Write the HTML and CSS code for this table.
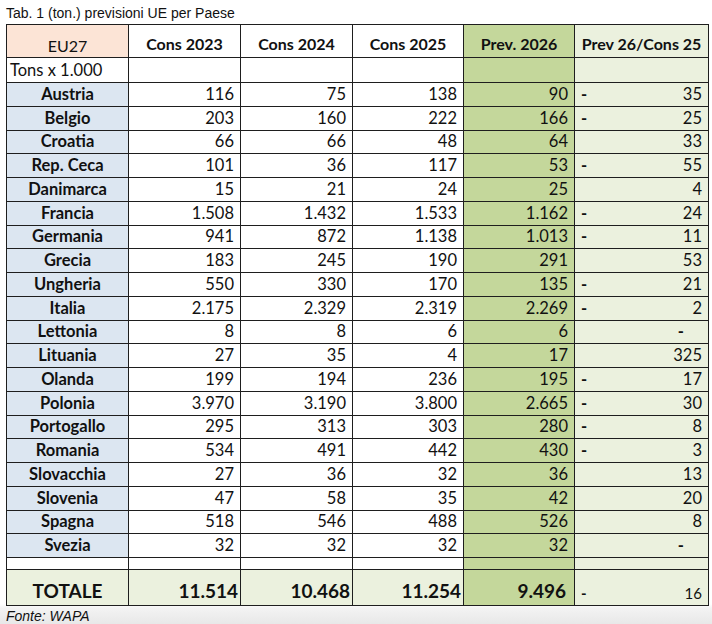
FILE: index.html
```html
<!DOCTYPE html>
<html lang="it">
<head>
<meta charset="utf-8">
<title>Tab. 1 previsioni UE per Paese</title>
<link rel="stylesheet" href="styles.css">
</head>
<body>
<div class="page">
  <div class="caption">Tab. 1 (ton.) previsioni UE per Paese</div>
  <table class="grid">
    <colgroup>
      <col class="c1"><col class="c2"><col class="c3"><col class="c4"><col class="c5"><col class="c6">
    </colgroup>
    <thead>
      <tr class="head">
        <th class="eu">EU27</th>
        <th>Cons 2023</th>
        <th>Cons 2024</th>
        <th>Cons 2025</th>
        <th class="prev">Prev. 2026</th>
        <th class="ratio">Prev 26/Cons 25</th>
      </tr>
    </thead>
    <tbody>
      <tr class="units">
        <td class="tons">Tons x 1.000</td><td></td><td></td><td></td><td class="prev"></td><td class="ratio"></td>
      </tr>
      <tr><td class="country">Austria</td><td>116</td><td>75</td><td>138</td><td class="prev">90</td><td class="ratio"><span class="neg">-</span>35</td></tr>
      <tr><td class="country">Belgio</td><td>203</td><td>160</td><td>222</td><td class="prev">166</td><td class="ratio"><span class="neg">-</span>25</td></tr>
      <tr><td class="country">Croatia</td><td>66</td><td>66</td><td>48</td><td class="prev">64</td><td class="ratio">33</td></tr>
      <tr><td class="country">Rep. Ceca</td><td>101</td><td>36</td><td>117</td><td class="prev">53</td><td class="ratio"><span class="neg">-</span>55</td></tr>
      <tr><td class="country">Danimarca</td><td>15</td><td>21</td><td>24</td><td class="prev">25</td><td class="ratio">4</td></tr>
      <tr><td class="country">Francia</td><td>1.508</td><td>1.432</td><td>1.533</td><td class="prev">1.162</td><td class="ratio"><span class="neg">-</span>24</td></tr>
      <tr><td class="country">Germania</td><td>941</td><td>872</td><td>1.138</td><td class="prev">1.013</td><td class="ratio"><span class="neg">-</span>11</td></tr>
      <tr><td class="country">Grecia</td><td>183</td><td>245</td><td>190</td><td class="prev">291</td><td class="ratio">53</td></tr>
      <tr><td class="country">Ungheria</td><td>550</td><td>330</td><td>170</td><td class="prev">135</td><td class="ratio"><span class="neg">-</span>21</td></tr>
      <tr><td class="country">Italia</td><td>2.175</td><td>2.329</td><td>2.319</td><td class="prev">2.269</td><td class="ratio"><span class="neg">-</span>2</td></tr>
      <tr><td class="country">Lettonia</td><td>8</td><td>8</td><td>6</td><td class="prev">6</td><td class="ratio zero">-</td></tr>
      <tr><td class="country">Lituania</td><td>27</td><td>35</td><td>4</td><td class="prev">17</td><td class="ratio">325</td></tr>
      <tr><td class="country">Olanda</td><td>199</td><td>194</td><td>236</td><td class="prev">195</td><td class="ratio"><span class="neg">-</span>17</td></tr>
      <tr><td class="country">Polonia</td><td>3.970</td><td>3.190</td><td>3.800</td><td class="prev">2.665</td><td class="ratio"><span class="neg">-</span>30</td></tr>
      <tr><td class="country">Portogallo</td><td>295</td><td>313</td><td>303</td><td class="prev">280</td><td class="ratio"><span class="neg">-</span>8</td></tr>
      <tr><td class="country">Romania</td><td>534</td><td>491</td><td>442</td><td class="prev">430</td><td class="ratio"><span class="neg">-</span>3</td></tr>
      <tr><td class="country">Slovacchia</td><td>27</td><td>36</td><td>32</td><td class="prev">36</td><td class="ratio">13</td></tr>
      <tr><td class="country">Slovenia</td><td>47</td><td>58</td><td>35</td><td class="prev">42</td><td class="ratio">20</td></tr>
      <tr><td class="country">Spagna</td><td>518</td><td>546</td><td>488</td><td class="prev">526</td><td class="ratio">8</td></tr>
      <tr><td class="country">Svezia</td><td>32</td><td>32</td><td>32</td><td class="prev">32</td><td class="ratio zero">-</td></tr>
      <tr class="spacer"><td></td><td></td><td></td><td></td><td class="prev"></td><td class="ratio"></td></tr>
      <tr class="total">
        <td class="label">TOTALE</td><td>11.514</td><td>10.468</td><td>11.254</td><td class="prev">9.496</td><td class="ratio plain"><span class="neg">-</span>16</td>
      </tr>
    </tbody>
  </table>
  <div class="source">Fonte: WAPA</div>
</div>
</body>
</html>
```
FILE: styles.css
```css
html, body {
  margin: 0;
  padding: 0;
  background: #ffffff;
}

.page {
  width: 712px;
  height: 624px;
  overflow: hidden;
  background: linear-gradient(to bottom, #ffffff 0, #ffffff 604px, #f3f3f3 608px, #e8e8e8 624px);
}

.caption {
  height: 24px;
  box-sizing: border-box;
  padding: 5px 0 0 6px;
  font-family: "Liberation Sans", Arial, sans-serif;
  font-size: 14px;
  line-height: 16px;
  color: #111;
}

.grid {
  margin-left: 6px;
  width: 702px;
  table-layout: fixed;
  border-collapse: collapse;
  font-family: Lato, "Open Sans", sans-serif;
  font-size: 16.5px;
  color: #111;
}

.c1 { width: 122px; }
.c2 { width: 112px; }
.c3 { width: 112px; }
.c4 { width: 111px; }
.c5 { width: 111px; }
.c6 { width: 134px; }

.grid th,
.grid td {
  border: 1px solid #1e1e1e;
  padding: 0 6px 0 4px;
  text-align: right;
  vertical-align: middle;
  line-height: 17px;
  white-space: nowrap;
  overflow: hidden;
  background: #ffffff;
}

.grid tr { height: 23.75px; }

.grid .head { height: 33px; }
.grid .head th {
  text-align: center;
  font-weight: 700;
  font-size: 16px;
  padding: 4px 2px 0 2px;
  border-top-width: 1.5px;
}

.grid .head .eu {
  font-weight: 400;
  background: #fce4d6;
  padding-top: 9px;
}

.grid .units { height: 25px; }
.grid .tons {
  text-align: left;
  padding-left: 3px;
}

.grid .country {
  text-align: center;
  font-weight: 700;
  background: #dce6f1;
  padding: 0 2px;
}

.grid .prev { background: #c4d79b; }
.grid .ratio { background: #ebf1de; }

.grid .neg {
  float: left;
  padding-left: 2px;
  font-weight: 700;
}

.grid .zero { padding-right: 24px; font-weight: 700; }

.grid .spacer { height: 12px; }
.grid .spacer td { line-height: 8px; }

.grid .total { height: 36px; }
.grid .total td {
  background: #ebf1de;
  font-weight: 700;
  font-size: 19px;
  vertical-align: bottom;
  padding-bottom: 3px;
  line-height: 22px;
  padding-right: 2px;
  border-bottom-width: 1.5px;
}
.grid .total .prev {
  background: #c4d79b;
  padding-right: 8px;
}
.grid .total .label {
  text-align: center;
  padding: 0 2px 3px 2px;
}
.grid .total .plain {
  font-weight: 400;
  font-size: 15px;
  padding-right: 6px;
  line-height: 18px;
}

.source {
  padding: 3px 0 0 6px;
  font-family: "Liberation Sans", Arial, sans-serif;
  font-style: italic;
  font-size: 14px;
  line-height: 15px;
  color: #111;
}
```
